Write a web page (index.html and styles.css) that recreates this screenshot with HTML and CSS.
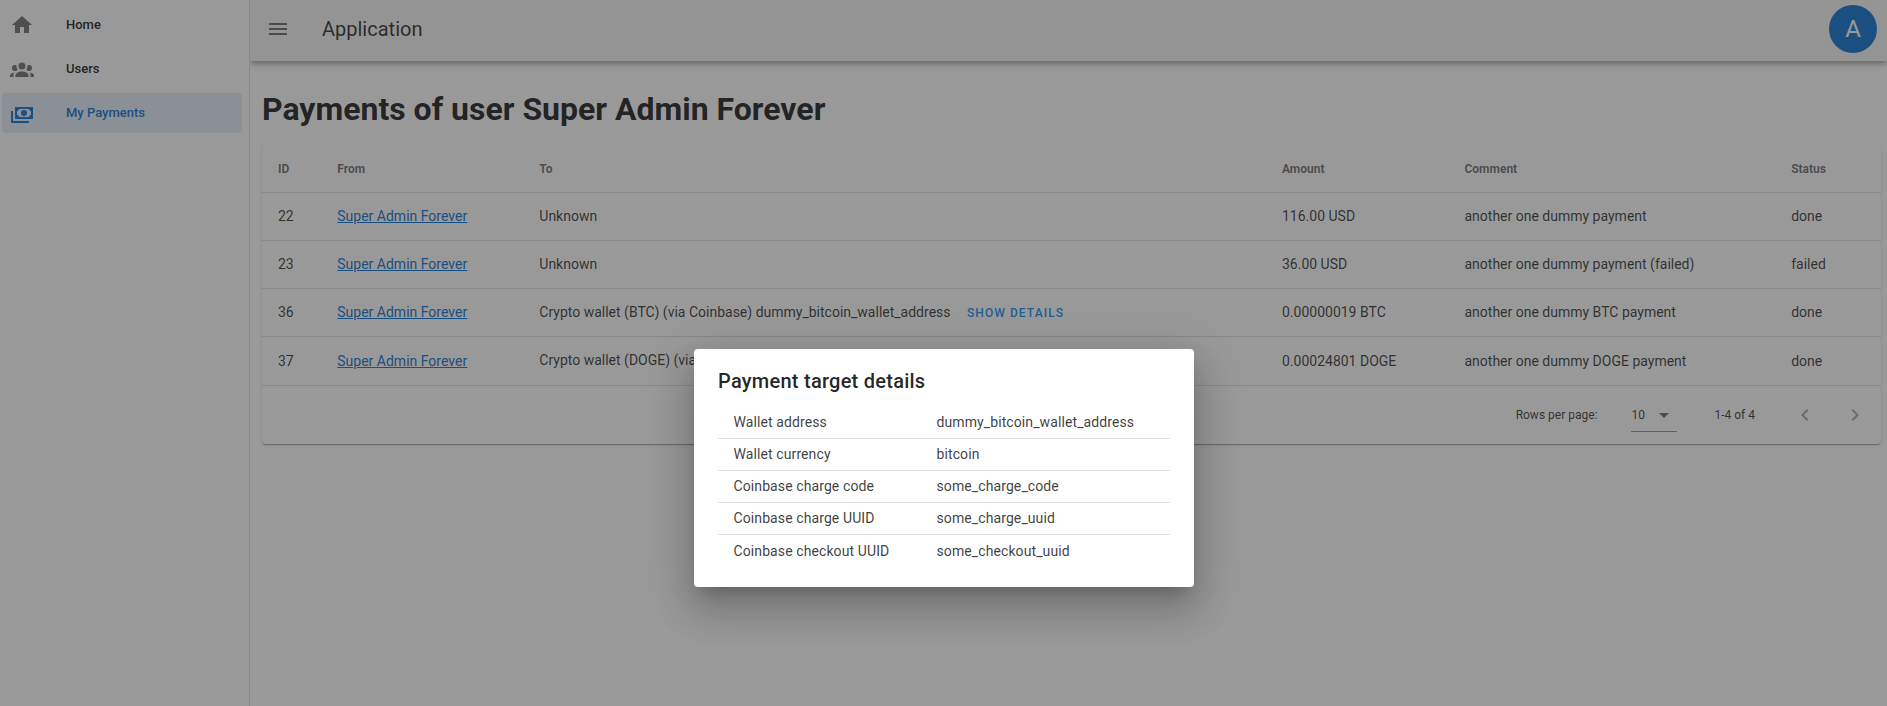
FILE: index.html
```html
<!DOCTYPE html>
<html lang="en">
<head>
<meta charset="utf-8">
<title>Application</title>
<link rel="stylesheet" href="styles.css">
</head>
<body>
<div class="app">
  <nav class="drawer">
    <a class="nav-item"><svg class="icon" viewBox="0 0 24 24"><path d="M10,20V14H14V20H19V12H22L12,3L2,12H5V20H10Z"/></svg><span>Home</span></a>
    <a class="nav-item"><svg class="icon" viewBox="0 0 24 24"><path d="M12,5.5A3.5,3.5 0 0,1 15.5,9A3.5,3.5 0 0,1 12,12.5A3.5,3.5 0 0,1 8.5,9A3.5,3.5 0 0,1 12,5.5M5,8C5.56,8 6.08,8.15 6.53,8.42C6.38,9.85 6.8,11.27 7.66,12.38C7.16,13.34 6.16,14 5,14A3,3 0 0,1 2,11A3,3 0 0,1 5,8M19,8A3,3 0 0,1 22,11A3,3 0 0,1 19,14C17.84,14 16.84,13.34 16.34,12.38C17.2,11.27 17.62,9.85 17.47,8.42C17.92,8.15 18.44,8 19,8M5.5,18.25C5.5,16.18 8.41,14.5 12,14.5C15.59,14.5 18.5,16.18 18.5,18.25V20H5.5V18.25M0,20V18.5C0,17.11 1.89,15.94 4.45,15.6C3.86,16.28 3.5,17.22 3.5,18.25V20H0M24,20H20.5V18.25C20.5,17.22 20.14,16.28 19.55,15.6C22.11,15.94 24,17.11 24,18.5V20Z"/></svg><span>Users</span></a>
    <a class="nav-item nav-item--active"><svg class="icon" viewBox="0 0 24 24"><path d="M5,6H23V18H5V6M14,9A3,3 0 0,1 17,12A3,3 0 0,1 14,15A3,3 0 0,1 11,12A3,3 0 0,1 14,9M9,8A2,2 0 0,1 7,10V14A2,2 0 0,1 9,16H19A2,2 0 0,1 21,14V10A2,2 0 0,1 19,8H9M1,10H3V20H19V22H1V10Z"/></svg><span>My Payments</span></a>
  </nav>
  <div class="page">
    <header class="app-bar">
      <svg class="icon" viewBox="0 0 24 24"><path d="M3,6H21V8H3V6M3,11H21V13H3V11M3,16H21V18H3V16Z"/></svg>
      <div class="app-title">Application</div>
      <div class="avatar">A</div>
    </header>
    <main class="content">
      <h1 class="heading">Payments of user Super Admin Forever</h1>
      <section class="card">
        <div class="row row--head"><div>ID</div><div>From</div><div>To</div><div>Amount</div><div>Comment</div><div>Status</div></div>
        <div class="row"><div>22</div><div><a class="link">Super Admin Forever</a></div><div>Unknown</div><div>116.00 USD</div><div>another one dummy payment</div><div>done</div></div>
        <div class="row"><div>23</div><div><a class="link">Super Admin Forever</a></div><div>Unknown</div><div>36.00 USD</div><div>another one dummy payment (failed)</div><div>failed</div></div>
        <div class="row"><div>36</div><div><a class="link">Super Admin Forever</a></div><div>Crypto wallet (BTC) (via Coinbase) dummy_bitcoin_wallet_address <span class="details">Show details</span></div><div>0.00000019 BTC</div><div>another one dummy BTC payment</div><div>done</div></div>
        <div class="row row--last"><div>37</div><div><a class="link">Super Admin Forever</a></div><div class="wallet">Crypto wallet (DOGE) (via Coinbase)</div><div>0.00024801 DOGE</div><div>another one dummy DOGE payment</div><div>done</div></div>
        <footer class="table-footer">
          <span class="per-page">Rows per page:</span>
          <div class="select"><span>10</span><svg class="icon" viewBox="0 0 24 24"><path d="M7,10L12,15L17,10H7Z"/></svg></div>
          <span class="range">1-4 of 4</span>
          <svg class="icon pager" viewBox="0 0 24 24"><path d="M15.41,16.58L10.83,12L15.41,7.41L14,6L8,12L14,18L15.41,16.58Z"/></svg>
          <svg class="icon pager" viewBox="0 0 24 24"><path d="M8.59,16.58L13.17,12L8.59,7.41L10,6L16,12L10,18L8.59,16.58Z"/></svg>
        </footer>
      </section>
    </main>
  </div>
  <div class="scrim"></div>
  <div class="dialog">
    <h2 class="dialog-title">Payment target details</h2>
    <div class="detail"><span>Wallet address</span><span>dummy_bitcoin_wallet_address</span></div>
    <div class="detail"><span>Wallet currency</span><span>bitcoin</span></div>
    <div class="detail"><span>Coinbase charge code</span><span>some_charge_code</span></div>
    <div class="detail"><span>Coinbase charge UUID</span><span>some_charge_uuid</span></div>
    <div class="detail"><span>Coinbase checkout UUID</span><span>some_checkout_uuid</span></div>
  </div>
</div>
</body>
</html>
```
FILE: styles.css
```css
* { box-sizing: border-box; }

body {
  margin: 0;
  font-family: Roboto, sans-serif;
  font-size: 16px;
  line-height: 1.5;
  color: rgba(0, 0, 0, .87);
}

.app {
  position: relative;
  display: flex;
  height: 100vh;
  overflow: hidden;
  background: #fff;
}

.icon {
  flex: none;
  display: block;
  width: 24px;
  height: 24px;
  fill: rgba(0, 0, 0, .54);
}

.drawer {
  position: relative;
  z-index: 1;
  flex: none;
  width: 250px;
  padding: 5px 7px 0 2px;
  border-right: 1px solid #e0e0e0;
  background: #fff;
}

.nav-item {
  display: flex;
  align-items: center;
  gap: 32px;
  height: 40px;
  margin-bottom: 4px;
  padding: 0 8px;
  border-radius: 4px;
  font-size: 13px;
  font-weight: 500;
  line-height: 16px;
}

.nav-item--active {
  background: rgba(25, 118, 210, .12);
  color: #1976d2;
}

.nav-item--active .icon { fill: #1976d2; }

.page {
  flex: 1;
  min-width: 0;
}

.app-bar {
  display: flex;
  align-items: center;
  height: 61px;
  padding: 0 10px 3px 16px;
  background: #f5f5f5;
  box-shadow: 0 2px 4px -1px rgba(0, 0, 0, .2), 0 4px 5px rgba(0, 0, 0, .14), 0 1px 10px rgba(0, 0, 0, .12);
}

.app-title {
  flex: 1;
  padding-left: 32px;
  font-size: 20px;
  color: rgba(0, 0, 0, .8);
}

.avatar {
  display: flex;
  align-items: center;
  justify-content: center;
  width: 48px;
  height: 48px;
  border-radius: 50%;
  background: #1976d2;
  color: #fff;
  font-size: 24px;
}

.content { padding: 24px 6px 0 12px; }

.heading {
  margin: 0 0 12px;
  font-size: 32px;
  font-weight: 700;
  line-height: 48px;
}

.card {
  border-radius: 4px;
  background: #fff;
  box-shadow: 0 2px 1px -1px rgba(0, 0, 0, .2), 0 1px 1px rgba(0, 0, 0, .14), 0 1px 3px rgba(0, 0, 0, .12);
}

.row {
  display: grid;
  grid-template-columns: 59.3px 202px 742.7px 182.5px 326.7px 1fr;
  align-items: center;
  height: 48px;
  border-bottom: 1px solid rgba(0, 0, 0, .12);
  font-size: 14px;
  white-space: nowrap;
  color: rgba(0, 0, 0, .77);
}

.row > div { padding-left: 16px; }

.row--head {
  font-size: 12px;
  font-weight: 700;
  color: rgba(0, 0, 0, .56);
}

.row--last { height: 49px; }
.wallet { padding-bottom: 1px; }

.link {
  color: #1976d2;
  text-decoration: underline;
}

.details {
  margin-left: 13px;
  color: #2196f3;
  font-size: 12px;
  font-weight: 500;
  letter-spacing: .0892857em;
  text-transform: uppercase;
}

.table-footer {
  display: flex;
  align-items: center;
  justify-content: flex-end;
  height: 58px;
  padding-right: 14px;
  font-size: 12px;
  color: rgba(0, 0, 0, .77);
}

.select {
  display: flex;
  align-items: center;
  justify-content: space-between;
  width: 46px;
  height: 33px;
  margin: 0 37px 0 34px;
  border-bottom: 1px solid rgba(0, 0, 0, .42);
}

.select .icon { margin-right: 1px; }
.range { margin-right: 38px; }
.pager { opacity: .6; }
.pager + .pager { margin-left: 26px; }

.scrim {
  position: absolute;
  z-index: 2;
  inset: 0;
  background: #212121;
  opacity: .46;
}

.dialog {
  position: absolute;
  z-index: 3;
  left: 694px;
  top: 349px;
  width: 500px;
  height: 238px;
  padding: 16px 24px 20px;
  border-radius: 4px;
  background: #fff;
  box-shadow: 0 11px 15px -7px rgba(0, 0, 0, .2), 0 24px 38px 3px rgba(0, 0, 0, .14), 0 9px 46px 8px rgba(0, 0, 0, .12);
}

.dialog-title {
  margin: 0 0 10px;
  font-size: 20px;
  font-weight: 500;
  line-height: 32px;
  letter-spacing: .0125em;
}

.detail {
  display: grid;
  grid-template-columns: 203px 1fr;
  align-items: center;
  height: 32px;
  padding-left: 15.5px;
  border-bottom: 1px solid rgba(0, 0, 0, .12);
  font-size: 14px;
  letter-spacing: .0071428571em;
  color: rgba(0, 0, 0, .77);
}

.detail:last-child {
  height: 33px;
  border-bottom: 0;
}
```
